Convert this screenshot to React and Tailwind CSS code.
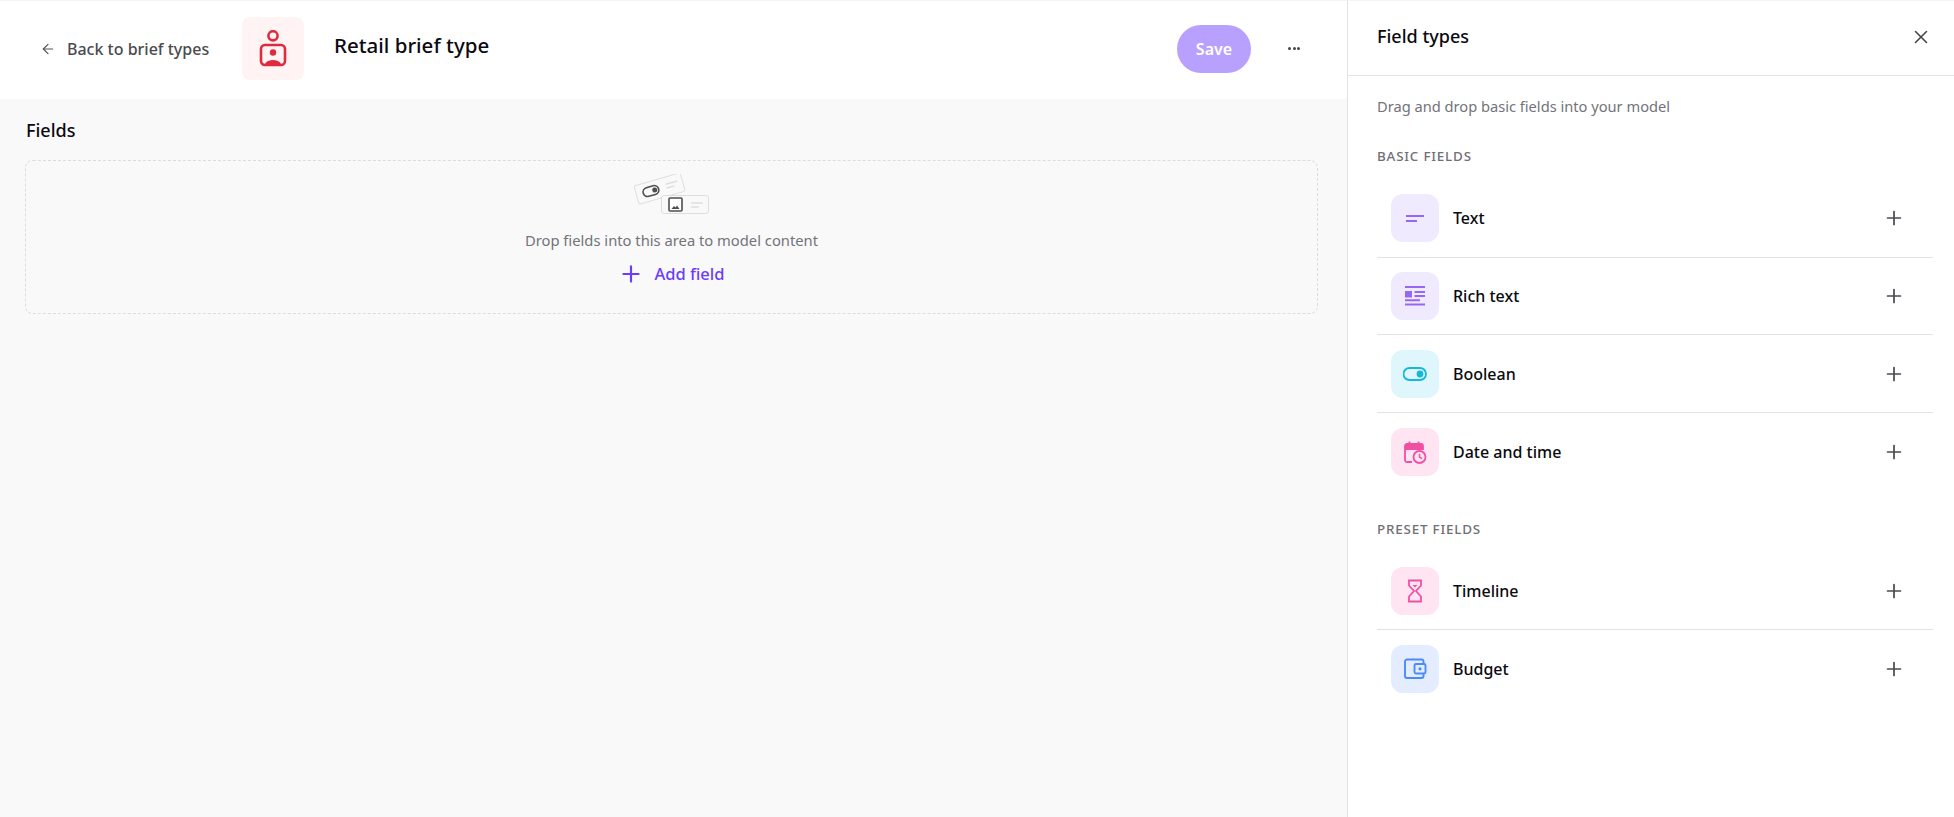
import React from "react";
import { ArrowLeft, X, Plus } from "lucide-react";

const basicFields = [
  { label: "Text", bg: "bg-[#f0eaff]", icon: "text" },
  { label: "Rich text", bg: "bg-[#f0eaff]", icon: "rich" },
  { label: "Boolean", bg: "bg-[#dff6fc]", icon: "bool" },
  { label: "Date and time", bg: "bg-[#ffe4f1]", icon: "date" },
];
const presetFields = [
  { label: "Timeline", bg: "bg-[#ffe4f1]", icon: "time" },
  { label: "Budget", bg: "bg-[#e3edff]", icon: "budget" },
];

function FieldIcon({ name }) {
  if (name === "text")
    return (
      <svg width="24" height="24" viewBox="0 0 24 24" fill="none" stroke="#9666f9" strokeWidth="2">
        <path d="M3 10h18M3 15h11" />
      </svg>
    );
  if (name === "rich")
    return (
      <svg width="24" height="24" viewBox="0 0 24 24" fill="none" stroke="#9666f9" strokeWidth="2">
        <path d="M2 3h20M11.500 8h10.500M11.500 12h10.500M2 16.300h15M2 20.500h20" />
        <rect x="2" y="7" width="7" height="6.500" fill="#9666f9" stroke="none" />
      </svg>
    );
  if (name === "bool")
    return (
      <svg width="24" height="24" viewBox="0 0 24 24" fill="none" stroke="#14b8d8" strokeWidth="1.8">
        <rect x="0.500" y="6" width="22.500" height="12" rx="6" />
        <circle cx="17" cy="12" r="3.400" fill="#14b8d8" stroke="none" />
      </svg>
    );
  if (name === "date")
    return (
      <svg width="24" height="24" viewBox="0 0 24 24" fill="none" stroke="#f050a4" strokeWidth="1.8">
        <path d="M9 22H4.500A2 2 0 0 1 2 20V6a2 2 0 0 1 2-2h14a2 2 0 0 1 2 2v4" />
        <path d="M2 5h18v5H2z" fill="#f050a4" stroke="none" />
        <path d="M6.500 1.500v4M15.500 1.500v4" />
        <circle cx="16.500" cy="17" r="6" fill="#ffe4f1" />
        <path d="M16.500 13.800V17l2.400 1.600" strokeWidth="1.500" />
      </svg>
    );
  if (name === "time")
    return (
      <svg width="24" height="24" viewBox="0 0 24 24" fill="none" stroke="#f050a4" strokeWidth="1.8">
        <path d="M6 1.500h12v5L13 12l5 5.500v5H6v-5l5-5.500L6 6.500z" />
        <path d="M9.500 6h5l-2.500 2.600z" fill="#f050a4" stroke="none" />
      </svg>
    );
  return (
    <svg width="24" height="24" viewBox="0 0 24 24" fill="none" stroke="#4a8aff" strokeWidth="1.9">
      <path d="M20.500 7V4.500a2 2 0 0 0-2-2H4a2 2 0 0 0-2 2V19a2 2 0 0 0 2 2h14.500a2 2 0 0 0 2-2v-2.500" />
      <rect x="11.500" y="7" width="11" height="9.500" rx="1.500" />
      <circle cx="17" cy="11.800" r="1.600" fill="#4a8aff" stroke="none" />
    </svg>
  );
}

function FieldRow({ field, last }) {
  return (
    <div className={`flex h-[77.7px] items-center pl-[14px] pr-[28px] ${last ? "" : "border-b border-[#e3e3e3]"}`}>
      <div className={`flex h-12 w-12 items-center justify-center rounded-xl ${field.bg}`}>
        <FieldIcon name={field.icon} />
      </div>
      <span className="ml-[14px] flex-1 text-[16px] font-medium text-[#0a0a0f]">{field.label}</span>
      <Plus className="h-[22px] w-[22px] text-[#4a4a50]" strokeWidth={1.9} />
    </div>
  );
}

function EmptyArt() {
  return (
    <svg width="76" height="42" viewBox="0 0 76 42" fill="none">
      <g transform="rotate(-16 26 16)">
        <rect x="2" y="5" width="48" height="19" rx="2" fill="#f9f9f9" stroke="#dedede" />
        <rect x="9" y="10" width="16" height="9" rx="4.500" stroke="#4f4f4f" strokeWidth="1.600" />
        <circle cx="21" cy="14.500" r="2.500" fill="#4f4f4f" />
        <path d="M33 12h12M33 16h8" stroke="#dedede" strokeWidth="1.500" />
      </g>
      <rect x="27.500" y="21.500" width="47" height="18" rx="2.500" fill="#f9f9f9" stroke="#dedede" />
      <rect x="35" y="24" width="13" height="13" rx="1" fill="#fff" stroke="#4f4f4f" strokeWidth="1.600" />
      <path d="M37.500 35l2.500-3 1.500 1.500 1.500-2 2.500 3.500z" fill="#4f4f4f" />
      <path d="M57 29h12M57 33h8" stroke="#dedede" strokeWidth="1.500" />
    </svg>
  );
}

export default function App() {
  return (
    <div className="flex h-[817px] w-[1954px] overflow-hidden bg-white font-['Noto_Sans','Open_Sans',sans-serif]">
      <main className="flex w-[1347px] flex-col bg-[#f9f9f9]">
        <header className="flex h-[99px] items-center border-t border-[#f3f3f3] bg-white pb-[3px] pl-[40px] pr-[47px]">
          <ArrowLeft className="h-4 w-4 text-[#55555a]" strokeWidth={1.8} />
          <span className="ml-[11px] w-[175px] text-[16px] font-medium text-[#4a4a50]">Back to brief types</span>
          <div className="flex h-[63px] w-[62px] items-center justify-center rounded-lg bg-[#fff3f3]">
            <svg width="28" height="38" viewBox="0 0 28 38" fill="none" stroke="#de2b3f" strokeWidth="2.600">
              <circle cx="14" cy="5.800" r="4.600" />
              <path d="M6 15h16a4 4 0 0 1 4 4v12a4 4 0 0 1-4 4H6a4 4 0 0 1-4-4V19a4 4 0 0 1 4-4z" />
              <circle cx="14" cy="22.500" r="3.200" fill="#de2b3f" stroke="none" />
              <path d="M6 34c1.500-3 4.500-4 8-4s6.500 1 8 4z" fill="#de2b3f" stroke="none" />
            </svg>
          </div>
          <h1 className="ml-[30px] mb-[6px] text-[20.5px] font-medium text-[#0a0a0f]">Retail brief type</h1>
          <button className="ml-auto h-12 w-[74px] rounded-full bg-[#b8a0fe] text-[16px] font-semibold text-white">Save</button>
          <div className="ml-[37px] flex gap-[1.5px]">
            <span className="h-[3px] w-[3px] rounded-full bg-[#44444a]" />
            <span className="h-[3px] w-[3px] rounded-full bg-[#44444a]" />
            <span className="h-[3px] w-[3px] rounded-full bg-[#44444a]" />
          </div>
        </header>
        <section className="pl-[25px] pr-[29px] pt-[19px]">
          <h2 className="ml-px text-[18px] leading-[24px] font-medium text-[#0a0a0f]">Fields</h2>
          <div className="mt-[18px] flex h-[154px] flex-col items-center rounded-lg border border-dashed border-[#dcdcdc] pt-[13px]">
            <EmptyArt />
            <p className="mt-[14px] text-[14.75px] leading-[20px] text-[#73737a]">Drop fields into this area to model content</p>
            <button className="mt-[11px] flex items-center text-[16.5px] font-medium text-[#6a3dfc]">
              <Plus className="h-[26px] w-[26px]" strokeWidth={2} />
              <span className="ml-[10px]">Add field</span>
            </button>
          </div>
        </section>
      </main>
      <aside className="flex flex-1 flex-col border-l border-t border-l-[#e3e3e3] border-t-[#f3f3f3] bg-white">
        <div className="flex h-[75px] items-center justify-between border-b border-[#e3e3e3] pb-[3px] pl-[29px] pr-[22px]">
          <h2 className="text-[18px] font-medium text-[#0a0a0f]">Field types</h2>
          <X className="h-[22px] w-[22px] text-[#44444a]" strokeWidth={1.7} />
        </div>
        <div className="pl-[29px] pr-[21px] pt-[20px]">
          <p className="text-[14.65px] leading-[20px] text-[#73737a]">Drag and drop basic fields into your model</p>
          <h3 className="mt-[30px] text-[13.4px] leading-[20px] font-medium tracking-[0.06em] text-[#6f6f76]">BASIC FIELDS</h3>
          <div className="mt-[14px]">
            {basicFields.map((f, i) => (
              <FieldRow key={f.label} field={f} last={i === basicFields.length - 1} />
            ))}
          </div>
          <h3 className="mt-[28px] text-[13.4px] leading-[20px] font-medium tracking-[0.06em] text-[#6f6f76]">PRESET FIELDS</h3>
          <div className="mt-[14px]">
            {presetFields.map((f, i) => (
              <FieldRow key={f.label} field={f} last={i === presetFields.length - 1} />
            ))}
          </div>
        </div>
      </aside>
    </div>
  );
}
